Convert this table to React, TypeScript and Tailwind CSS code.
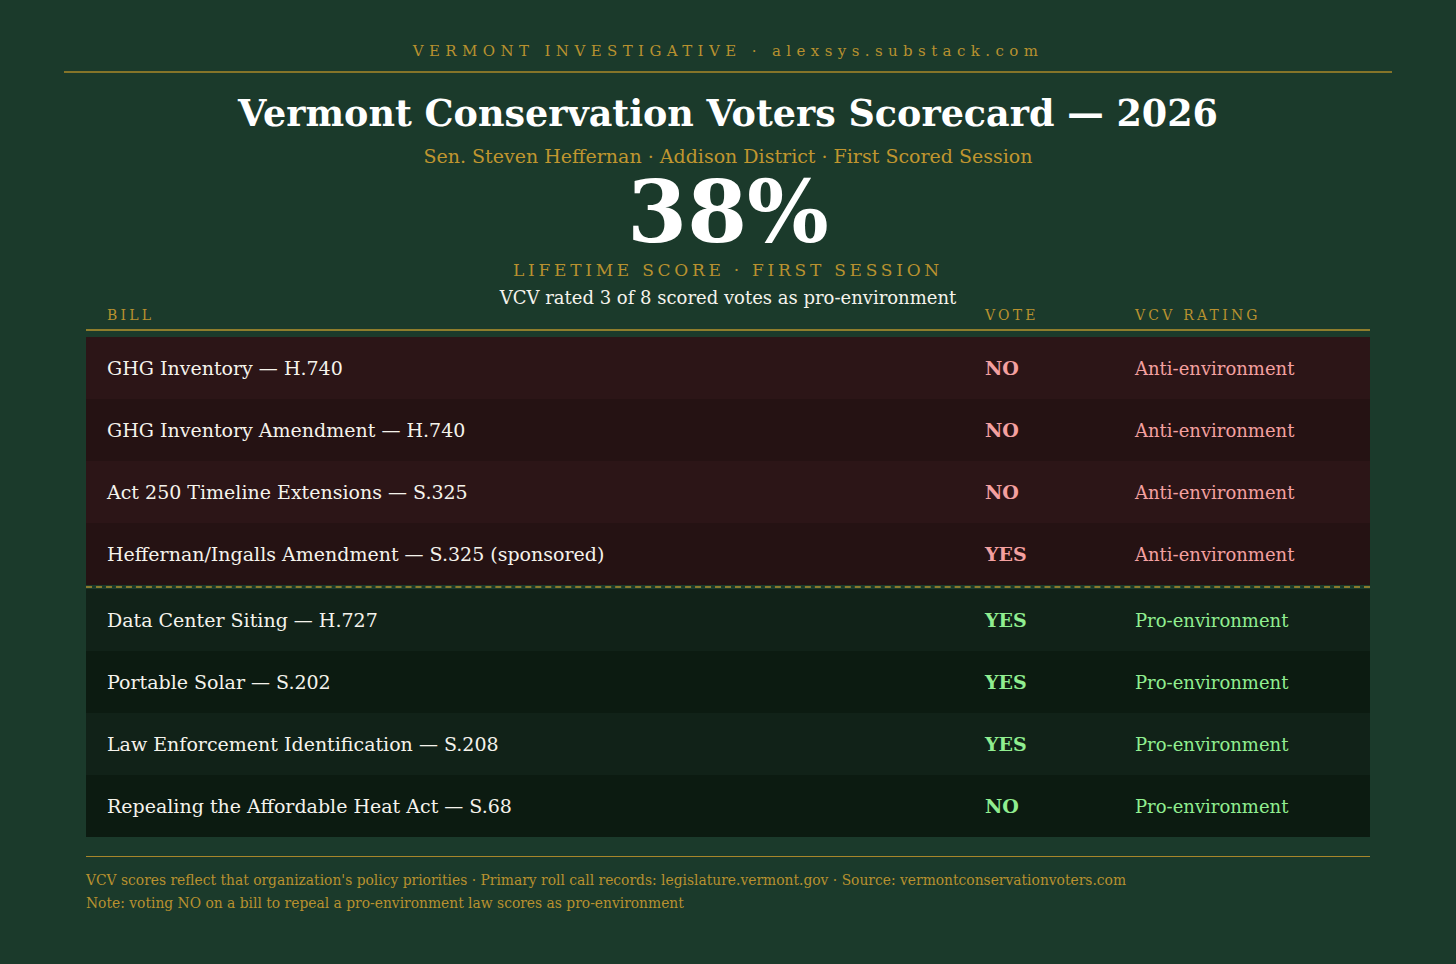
import React from 'react';

type Row = { bill: string; vote: string; rating: string };

const antiRows: Row[] = [
  { bill: 'GHG Inventory — H.740', vote: 'NO', rating: 'Anti-environment' },
  { bill: 'GHG Inventory Amendment — H.740', vote: 'NO', rating: 'Anti-environment' },
  { bill: 'Act 250 Timeline Extensions — S.325', vote: 'NO', rating: 'Anti-environment' },
  { bill: 'Heffernan/Ingalls Amendment — S.325 (sponsored)', vote: 'YES', rating: 'Anti-environment' },
];

const proRows: Row[] = [
  { bill: 'Data Center Siting — H.727', vote: 'YES', rating: 'Pro-environment' },
  { bill: 'Portable Solar — S.202', vote: 'YES', rating: 'Pro-environment' },
  { bill: 'Law Enforcement Identification — S.208', vote: 'YES', rating: 'Pro-environment' },
  { bill: 'Repealing the Affordable Heat Act — S.68', vote: 'NO', rating: 'Pro-environment' },
];

function ScoreRow({ row, bg, tone }: { row: Row; bg: string; tone: 'anti' | 'pro' }) {
  const color = tone === 'anti' ? 'text-[#f4a0a0]' : 'text-[#90ee90]';
  return (
    <div className={`flex h-[62px] items-center ${bg}`}>
      <div className="w-[878px] pl-[21px] text-[19px] text-[#f5f3ec]">{row.bill}</div>
      <div className={`w-[150px] pl-[21px] text-[19px] font-bold ${color}`}>{row.vote}</div>
      <div className={`flex-1 pl-[21px] text-[18px] ${color}`}>{row.rating}</div>
    </div>
  );
}

export default function App() {
  return (
    <div
      className="min-h-screen bg-[#1b3a2b] px-16 pt-[41px] pb-10"
      style={{ fontFamily: '"DejaVu Serif", "Liberation Serif", serif' }}
    >
      {/* masthead */}
      <div className="border-b-2 border-[#857429] pb-[10px]">
        <div className="text-center text-[15px] leading-5 tracking-[0.36em] text-[#b8912f]">
          VERMONT INVESTIGATIVE · alexsys.substack.com
        </div>
      </div>

      {/* title block */}
      <h1 className="mt-[19px] text-center text-[36.5px] font-bold leading-[44px] text-white">
        Vermont Conservation Voters Scorecard — 2026
      </h1>
      <div className="mt-[8px] text-center text-[19px] leading-6 text-[#c0962f]">
        Sen. Steven Heffernan · Addison District · First Scored Session
      </div>
      <div className="mt-[4px] text-center text-[86px] font-bold leading-[80px] text-white">38%</div>
      <div className="mt-[8px] text-center text-[17px] leading-5 tracking-[0.22em] text-[#b8912f]">
        LIFETIME SCORE · FIRST SESSION
      </div>
      <div className="mt-[8px] text-center text-[18px] leading-5 text-[#f5f3ec]">
        VCV rated 3 of 8 scored votes as pro-environment
      </div>

      {/* table */}
      <div className="mx-[22px] mt-[-1px]">
        <div className="flex border-b-2 border-[#8f7d2c] pb-[6px] text-[14px] leading-4 tracking-[0.23em] text-[#b8912f]">
          <div className="w-[878px] pl-[21px]">BILL</div>
          <div className="w-[150px] pl-[21px]">VOTE</div>
          <div className="flex-1 pl-[21px]">VCV RATING</div>
        </div>

        <div className="mt-[6px]">
          {antiRows.map((r, i) => (
            <ScoreRow key={r.bill} row={r} tone="anti" bg={i % 2 === 0 ? 'bg-[#2c1517]' : 'bg-[#251213]'} />
          ))}
          <div className="flex h-[4px] items-center">
            <div className="w-full border-t-2 border-dashed border-[#8a7a2e]" />
          </div>
          {proRows.map((r, i) => (
            <ScoreRow key={r.bill} row={r} tone="pro" bg={i % 2 === 0 ? 'bg-[#112218]' : 'bg-[#0c1b11]'} />
          ))}
        </div>

        {/* footer */}
        <div className="mt-[19px] border-t border-[#a8862a] pt-[12px] text-[13.85px] leading-[23px] text-[#b8912f]">
          <div>
            VCV scores reflect that organization's policy priorities · Primary roll call records:
            legislature.vermont.gov · Source: vermontconservationvoters.com
          </div>
          <div>Note: voting NO on a bill to repeal a pro-environment law scores as pro-environment</div>
        </div>
      </div>
    </div>
  );
}
